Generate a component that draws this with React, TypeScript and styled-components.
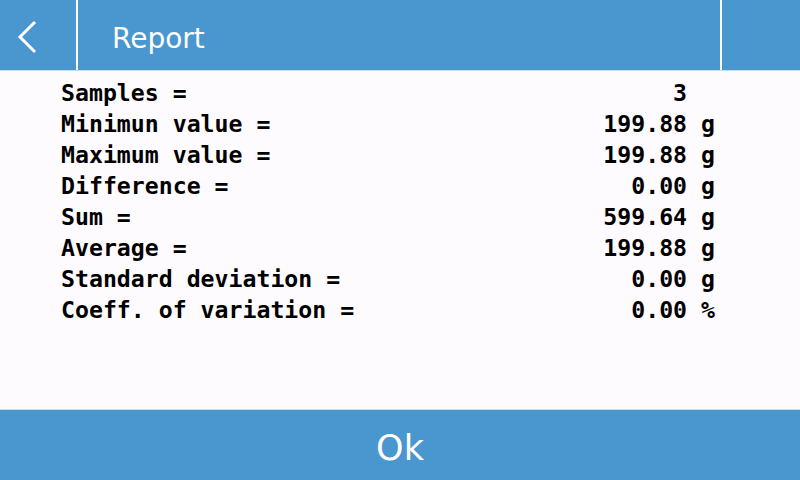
import React from "react";
import styled, { createGlobalStyle } from "styled-components";

const GlobalStyle = createGlobalStyle`
    html, body {
        margin: 0;
        padding: 0;
        background: #fefbfe;
    }
`;

const Screen = styled.div`
    width: 800px;
    height: 480px;
    display: flex;
    flex-direction: column;
    background: #fefbfe;
    overflow: hidden;
`;

const Header = styled.header`
    display: flex;
    height: 70px;
    background: #4a96cf;
    border-bottom: 1px solid #c9ddef;
    gap: 2px;
    background-clip: padding-box;
`;

const HeaderCell = styled.div<{ $width?: number; $grow?: boolean }>`
    display: flex;
    align-items: center;
    background: #4a96cf;
    width: ${(p) => (p.$width ? `${p.$width}px` : "auto")};
    flex: ${(p) => (p.$grow ? 1 : "none")};
    box-shadow: 2px 0 0 #fefbfe;
`;

const BackButton = styled(HeaderCell)`
    justify-content: flex-start;
    padding: 2px 0 0 16px;
    box-sizing: border-box;
`;

const Title = styled(HeaderCell)`
    padding: 6px 0 0 34px;
    color: #ffffff;
    font-family: "DejaVu Sans", sans-serif;
    font-size: 28px;
`;

const Content = styled.main`
    flex: 1;
    padding: 6px 0 0 61px;
`;

const Table = styled.div`
    display: grid;
    grid-template-columns: 541px 113px;
    grid-auto-rows: 31px;
    font-family: "DejaVu Sans Mono", monospace;
    font-weight: bold;
    font-size: 23.2px;
    color: #000000;
    line-height: 31px;
`;

const Label = styled.div`
    white-space: pre;
`;

const Value = styled.div`
    white-space: pre;
    text-align: right;
`;

const Footer = styled.button`
    height: 71px;
    border: none;
    border-top: 1px solid #c9ddef;
    background: #4a96cf;
    background-clip: padding-box;
    color: #ffffff;
    font-family: "DejaVu Sans", sans-serif;
    font-size: 35px;
    padding: 6px 0 0 0;
    cursor: pointer;
`;

const rows: [string, string][] = [
    ["Samples =", "3  "],
    ["Minimun value =", "199.88 g"],
    ["Maximum value =", "199.88 g"],
    ["Difference =", "0.00 g"],
    ["Sum =", "599.64 g"],
    ["Average =", "199.88 g"],
    ["Standard deviation =", "0.00 g"],
    ["Coeff. of variation =", "0.00 %"],
];

const App: React.FC = () => {
    return (
        <>
            <GlobalStyle />
            <Screen>
                <Header>
                    <BackButton $width={76}>
                        <svg width="24" height="36" viewBox="0 0 24 36">
                            <polyline
                                points="19,4 4,19 19,34"
                                fill="none"
                                stroke="#ffffff"
                                strokeWidth="3"
                            />
                        </svg>
                    </BackButton>
                    <Title $grow>Report</Title>
                    <HeaderCell $width={78} />
                </Header>
                <Content>
                    <Table>
                        {rows.map(([label, value]) => (
                            <React.Fragment key={label}>
                                <Label>{label}</Label>
                                <Value>{value}</Value>
                            </React.Fragment>
                        ))}
                    </Table>
                </Content>
                <Footer>Ok</Footer>
            </Screen>
        </>
    );
};

export default App;
